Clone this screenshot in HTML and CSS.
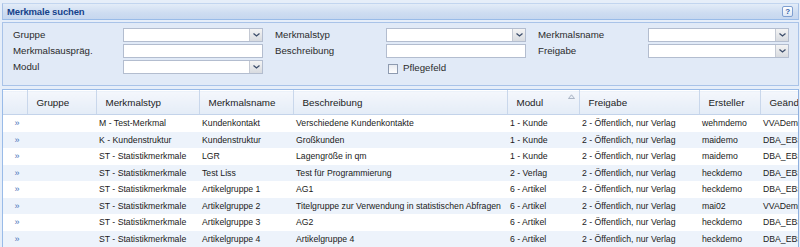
FILE: index.html
```html
<!DOCTYPE html>
<html>
<head>
    <title>Merkmale suchen</title>
    <link rel="stylesheet" href="styles.css">
</head>
<body>
    <div class="page">
        <!-- Suchbereich -->
        <div class="search-panel">
            <div class="panel-title">
                <span>Merkmale suchen</span>
                <span class="help-btn">?</span>
            </div>
            <div class="panel-body">
                <div class="form-grid">
                    <label class="lbl">Gruppe</label>
                    <div class="field"><div class="combo"><span class="combo-input"></span><span class="trigger"><svg width="7" height="4" viewBox="0 0 7 4"><path d="M0.5 0.5 L3.5 3 L6.5 0.5" fill="none" stroke="#3d4e6b" stroke-width="1.3"/></svg></span></div></div>
                    <label class="lbl">Merkmalstyp</label>
                    <div class="field"><div class="combo"><span class="combo-input"></span><span class="trigger"><svg width="7" height="4" viewBox="0 0 7 4"><path d="M0.5 0.5 L3.5 3 L6.5 0.5" fill="none" stroke="#3d4e6b" stroke-width="1.3"/></svg></span></div></div>
                    <label class="lbl">Merkmalsname</label>
                    <div class="field"><div class="combo wide"><span class="combo-input"></span><span class="trigger"><svg width="7" height="4" viewBox="0 0 7 4"><path d="M0.5 0.5 L3.5 3 L6.5 0.5" fill="none" stroke="#3d4e6b" stroke-width="1.3"/></svg></span></div></div>

                    <label class="lbl">Merkmalsauspräg.</label>
                    <div class="field"><input type="text" class="text-input"></div>
                    <label class="lbl">Beschreibung</label>
                    <div class="field"><input type="text" class="text-input"></div>
                    <label class="lbl">Freigabe</label>
                    <div class="field"><div class="combo wide"><span class="combo-input"></span><span class="trigger"><svg width="7" height="4" viewBox="0 0 7 4"><path d="M0.5 0.5 L3.5 3 L6.5 0.5" fill="none" stroke="#3d4e6b" stroke-width="1.3"/></svg></span></div></div>

                    <label class="lbl">Modul</label>
                    <div class="field"><div class="combo"><span class="combo-input"></span><span class="trigger"><svg width="7" height="4" viewBox="0 0 7 4"><path d="M0.5 0.5 L3.5 3 L6.5 0.5" fill="none" stroke="#3d4e6b" stroke-width="1.3"/></svg></span></div></div>
                    <div></div>
                    <div class="field check-field"><span class="checkbox"></span><span class="lbl">Pflegefeld</span></div>
                    <div></div>
                    <div></div>
                </div>
            </div>
        </div>

        <!-- Ergebnisliste -->
        <div class="grid">
            <table>
                <colgroup>
                    <col style="width:24px">
                    <col style="width:69px">
                    <col style="width:103px">
                    <col style="width:94px">
                    <col style="width:214px">
                    <col style="width:72px">
                    <col style="width:120px">
                    <col style="width:61px">
                    <col style="width:90px">
                </colgroup>
                <thead>
                    <tr>
                        <th></th>
                        <th>Gruppe</th>
                        <th>Merkmalstyp</th>
                        <th>Merkmalsname</th>
                        <th>Beschreibung</th>
                        <th class="sorted">Modul<svg class="sort-icon" width="7" height="5" viewBox="0 0 7 5"><path d="M0.5 4.5 L3.5 0.8 L6.5 4.5 Z" fill="#e8eef7" stroke="#9aa6b8" stroke-width="0.8"/></svg></th>
                        <th>Freigabe</th>
                        <th>Ersteller</th>
                        <th>Geändert</th>
                    </tr>
                </thead>
                <tbody id="rows"></tbody>
            </table>
        </div>
    </div>

    <script>
        const merkmale = [
            ['', 'M - Test-Merkmal', 'Kundenkontakt', 'Verschiedene Kundenkontakte', '1 - Kunde', 'wehmdemo', 'VVADemo'],
            ['', 'K - Kundenstruktur', 'Kundenstruktur', 'Großkunden', '1 - Kunde', 'maidemo', 'DBA_EBS'],
            ['', 'ST - Statistikmerkmale', 'LGR', 'Lagengröße in qm', '1 - Kunde', 'maidemo', 'DBA_EBS'],
            ['', 'ST - Statistikmerkmale', 'Test Liss', 'Test für Programmierung', '2 - Verlag', 'heckdemo', 'DBA_EBS'],
            ['', 'ST - Statistikmerkmale', 'Artikelgruppe 1', 'AG1', '6 - Artikel', 'heckdemo', 'DBA_EBS'],
            ['', 'ST - Statistikmerkmale', 'Artikelgruppe 2', 'Titelgruppe zur Verwendung in statistischen Abfragen', '6 - Artikel', 'mai02', 'VVADemo'],
            ['', 'ST - Statistikmerkmale', 'Artikelgruppe 3', 'AG2', '6 - Artikel', 'heckdemo', 'DBA_EBS'],
            ['', 'ST - Statistikmerkmale', 'Artikelgruppe 4', 'Artikelgruppe 4', '6 - Artikel', 'heckdemo', 'DBA_EBS']
        ];

        document.getElementById('rows').innerHTML = merkmale.map(m => `
            <tr>
                <td class="expander">»</td>
                <td>${m[0]}</td>
                <td>${m[1]}</td>
                <td>${m[2]}</td>
                <td>${m[3]}</td>
                <td>${m[4]}</td>
                <td>2 - Öffentlich, nur Verlag</td>
                <td>${m[5]}</td>
                <td>${m[6]}</td>
            </tr>
        `).join('');
    </script>
</body>
</html>
```

FILE: styles.css
```css
body { margin: 0; background: #e6eef9; font-family: "Liberation Sans", Arial, sans-serif; }
.page { padding: 3px 1px 0 2px; height: 244px; overflow: hidden; }

/* Suchbereich */
.panel-title {
    height: 17px;
    border: 1px solid #a7c1e6;
    border-top-color: #c2d5ef;
    border-bottom-color: #99bbe8;
    background: linear-gradient(#e3ecf8, #cddcf1 60%, #c6d7ef);
    display: flex;
    align-items: center;
    justify-content: space-between;
    padding: 0 4px 0 4px;
    box-sizing: border-box;
    font-size: 9.5px;
    font-weight: bold;
    color: #15428b;
    letter-spacing: -0.15px;
}
.help-btn {
    width: 9px;
    height: 9px;
    border: 1px solid #7f9fd0;
    border-radius: 2px;
    background: linear-gradient(#ffffff, #dde7f5);
    color: #2f5fa8;
    font-size: 8px;
    line-height: 9px;
    text-align: center;
    margin-right: 1px;
}
.panel-body {
    margin-top: 2px;
    border: 1px solid #a9c3e8;
    background: #e1eaf7;
    padding: 5px 0 9px 10px;
    height: 48px;
}
.form-grid {
    display: grid;
    grid-template-columns: 110px 152px 111px 152px 110px 141px;
    grid-auto-rows: 16px;
}
.lbl {
    font-size: 9.7px;
    color: #2b2b2b;
    line-height: 14px;
    white-space: nowrap;
}
.field { height: 14px; }
.combo, .text-input {
    box-sizing: border-box;
    width: 140px;
    height: 14px;
    border: 1px solid #b3bdcf;
    background: #fff;
}
.combo.wide { width: 141px; }
.combo { display: flex; }
.combo-input { flex: 1; }
.trigger {
    width: 12px;
    border-left: 1px solid #c4c9d3;
    background: linear-gradient(#f4f4f4, #d8dbe0);
    display: flex;
    align-items: center;
    justify-content: center;
}
.text-input { display: block; margin: 0; padding: 0; outline: none; }
.check-field { display: flex; align-items: center; }
.checkbox {
    width: 8px;
    height: 8px;
    border: 1px solid #8e9bb0;
    background: linear-gradient(#e8ebf0, #ffffff);
    margin: 3px 5px 0 2px;
}
.check-field .lbl { margin-top: 2px; }

/* Tabelle */
.grid {
    margin-top: 3px;
    border: 1px solid #99bbe8;
    border-right-color: #8fb0de;
    background: #fff;
    overflow: hidden;
    height: 160px;
}
table { border-collapse: collapse; table-layout: fixed; width: 847px; }
th {
    height: 23px;
    padding: 0 0 0 9px;
    text-align: left;
    font-weight: normal;
    font-size: 9.8px;
    color: #222;
    background: linear-gradient(#f4f7fc, #e4ecf7);
    border-right: 1px solid #c9d7eb;
    border-bottom: 1px solid #c3d3ea;
    border-top: 1px solid #fff;
    white-space: nowrap;
    overflow: hidden;
    position: relative;
}
.sort-icon { position: absolute; right: 4px; top: 3px; }
td {
    height: 16.5px;
    padding: 0 0 0 3px;
    font-size: 8.7px;
    color: #1a1a1a;
    white-space: nowrap;
    overflow: hidden;
}
tbody tr:nth-child(even) td { background: #edf3fb; }
td.expander { color: #4a74b8; text-align: center; padding: 0 0 0 4px; font-size: 9px; }
```
